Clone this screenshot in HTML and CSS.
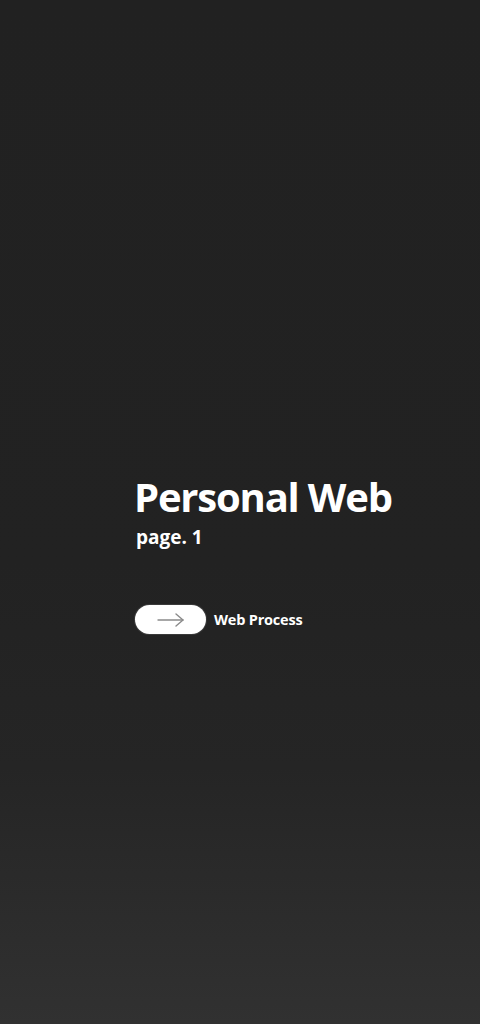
FILE: index.html
```html
<!DOCTYPE html>
<html>
<head>
<meta charset="utf-8">
<link rel="stylesheet" href="styles.css">
</head>
<body>
<main class="hero">
  <h1 class="title">Personal Web</h1>
  <p class="subtitle">page. 1</p>
  <div class="action">
    <button class="pill" aria-label="next">
      <svg width="28" height="14" viewBox="0 0 28 14" fill="none" stroke="#8a8a8a" stroke-width="1.4" stroke-linecap="round" stroke-linejoin="round">
        <path d="M1 7 H26"/>
        <path d="M19 1 L26 7 L19 13"/>
      </svg>
    </button>
    <span class="label">Web Process</span>
  </div>
</main>
</body>
</html>
```
FILE: styles.css
```css
html, body {
  margin: 0;
  padding: 0;
  height: 100%;
}
body {
  background: linear-gradient(to bottom, #212121 0%, #222222 55%, #252525 75%, #313131 100%);
  font-family: "Open Sans", "DejaVu Sans", sans-serif;
  color: #fff;
}
.hero {
  display: flex;
  flex-direction: column;
  align-items: flex-start;
  padding: 475px 0 0 134px;
}
.title {
  margin: 0;
  font-size: 40px;
  font-weight: 700;
  line-height: 44px;
  letter-spacing: -1.2px;
}
.subtitle {
  margin: 6px 0 0 2px;
  font-size: 19px;
  font-weight: 700;
  line-height: 24px;
}
.action {
  display: flex;
  align-items: center;
  gap: 8px;
  margin-top: 56px;
  margin-left: 1px;
}
.pill {
  width: 71px;
  height: 29px;
  border: none;
  border-radius: 15px;
  background: #fff;
  display: flex;
  align-items: center;
  justify-content: center;
  padding: 0;
  box-shadow: 0 0 0 1px #3a3a3a;
}
.label {
  font-size: 14.5px;
  font-weight: 700;
  letter-spacing: -0.2px;
}
```
